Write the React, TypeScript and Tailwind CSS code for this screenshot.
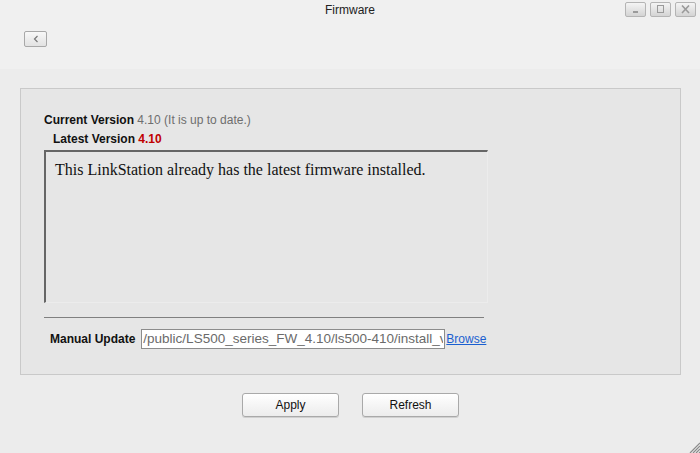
import React from 'react';

const WinButton: React.FC<{ kind: 'min' | 'max' | 'close' }> = ({ kind }) => (
  <div className="w-[21px] h-[15px] border border-[#b4b4b4] rounded-[2px] bg-gradient-to-b from-[#f4f4f4] to-[#d4d4d4] flex items-center justify-center">
    <svg width="11" height="9" viewBox="0 0 11 9">
      {kind === 'min' && <rect x="3" y="6" width="5" height="2" fill="#9a9a9a" />}
      {kind === 'max' && <rect x="2.5" y="0.5" width="6" height="7" fill="none" stroke="#9a9a9a" strokeWidth="1" />}
      {kind === 'close' && <path d="M2 0.5 L9 8 M9 0.5 L2 8" stroke="#9a9a9a" strokeWidth="1.6" />}
    </svg>
  </div>
);

const ActionButton: React.FC<{ label: string }> = ({ label }) => (
  <button className="w-[97px] h-[24px] rounded-[3px] border border-[#a9a9a9] bg-gradient-to-b from-[#ffffff] to-[#ececec] text-[12px] text-[#111] shadow-[0_1px_0_#d0d0d0]">
    {label}
  </button>
);

const App: React.FC = () => {
  return (
    <div className="relative w-[700px] h-[453px] bg-[#ececec] overflow-hidden" style={{ fontFamily: '"Liberation Sans", Arial, sans-serif' }}>
      {/* header */}
      <div className="h-[69px] bg-[#f0f0f0]">
        <div className="relative h-[19px] flex items-center justify-center">
          <span className="text-[12px] text-[#222]">Firmware</span>
          <div className="absolute right-[4px] top-[2px] flex gap-[4px]">
            <WinButton kind="min" />
            <WinButton kind="max" />
            <WinButton kind="close" />
          </div>
        </div>
        <div className="pl-[24px] pt-[12px]">
          <button className="w-[23px] h-[16px] border border-[#a8a8a8] rounded-[2px] bg-gradient-to-b from-[#f8f8f8] to-[#e2e2e2] flex items-center justify-center">
            <svg width="8" height="8" viewBox="0 0 8 8">
              <path d="M5.5 1 L2.5 4 L5.5 7" fill="none" stroke="#777" strokeWidth="1.2" />
            </svg>
          </button>
        </div>
      </div>

      {/* panel */}
      <div className="ml-[20px] mt-[19px] w-[661px] h-[287px] border border-[#c9c9c9] bg-[#e6e6e6] pl-[23px] pt-[24px]">
        <div className="text-[12px] leading-[14px]">
          <span className="font-bold text-[#111]">Current Version</span>
          <span className="text-[#6e6e6e]"> 4.10 (It is up to date.)</span>
        </div>
        <div className="mt-[5px] ml-[9px] text-[12px] leading-[14px]">
          <span className="font-bold text-[#111]">Latest Version</span>
          <span className="font-bold text-[#c00000]"> 4.10</span>
        </div>
        <div className="mt-[4px] w-[444px] h-[153px] border-t-2 border-l-2 border-t-[#666] border-l-[#666] border-r border-b border-r-[#ececec] border-b-[#ececec] bg-[#e6e6e6] pl-[9px] pt-[8px]">
          <p className="text-[16px] leading-[20px] text-[#111]" style={{ fontFamily: '"Liberation Serif", "Times New Roman", serif' }}>
            This LinkStation already has the latest firmware installed.
          </p>
        </div>
        <div className="mt-[14px] w-[440px] h-px bg-[#808080]" />
        <div className="mt-[11px] ml-[6px] flex items-center">
          <span className="text-[12px] font-bold text-[#111] mr-[6px]">Manual Update</span>
          <input
            readOnly
            value="/public/LS500_series_FW_4.10/ls500-410/install_v.bin"
            className="w-[304px] h-[20px] border border-[#8c8c8c] bg-white px-[1px] text-[13.5px] text-[#6a6a6a] outline-none"
            style={{ fontFamily: '"Liberation Sans", Arial, sans-serif' }}
          />
          <a href="#" className="ml-[1px] text-[12px] text-[#1a5fd0] underline">Browse</a>
        </div>
      </div>

      {/* actions */}
      <div className="mt-[18px] flex justify-center gap-[23px] pl-[1px]">
        <ActionButton label="Apply" />
        <ActionButton label="Refresh" />
      </div>

      {/* resize grip */}
      <svg className="absolute right-0 bottom-0" width="12" height="12" viewBox="0 0 12 12">
        <path d="M12 2 L2 12 M12 5 L5 12 M12 8 L8 12 M12 11 L11 12" stroke="#8a8a8a" strokeWidth="1.2" />
      </svg>
    </div>
  );
};

export default App;
